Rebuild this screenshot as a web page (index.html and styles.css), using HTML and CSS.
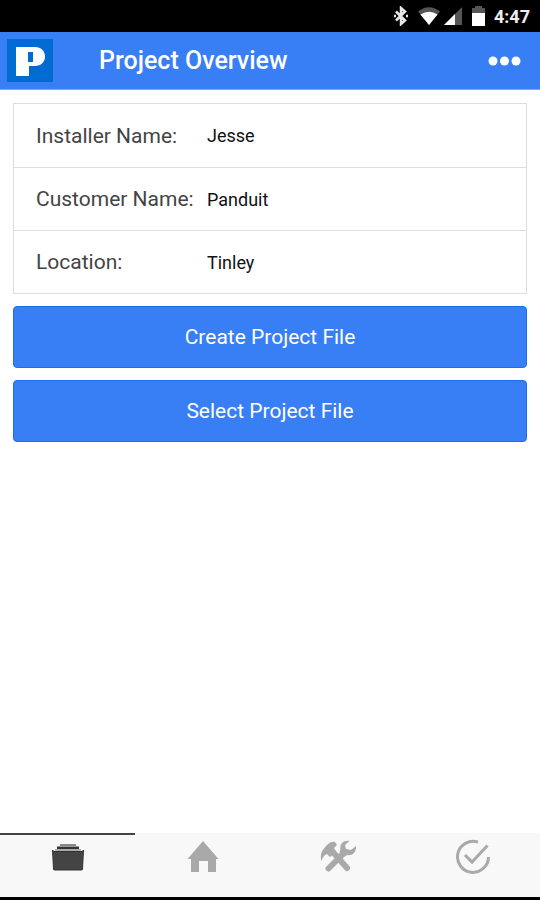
FILE: index.html
```html
<!DOCTYPE html>
<html lang="en">
<head>
<meta charset="utf-8">
<meta name="viewport" content="width=device-width, initial-scale=1">
<title>Project Overview</title>
<link rel="stylesheet" href="styles.css">
</head>
<body>
<div class="status">
  <svg width="14" height="20" viewBox="0 0 14 20" fill="none" stroke="#e8e8e8" stroke-width="2.500" aria-hidden="true"><path d="M2 5.500l9 9L7 18V2l4 3.500-9 9"/><path d="M0 10h2M12 10h2"/></svg>
  <svg class="wifi" width="22" height="18" viewBox="0 0 22 18" aria-hidden="true"><path fill="#555" d="M0 4.500Q11-4 22 4.500L11 18z"/><path fill="#fff" d="M2.500 7.500Q11 2 19.500 7.500L11 18z"/></svg>
  <svg class="signal" width="20" height="18" viewBox="0 0 20 18" aria-hidden="true"><path fill="#555" d="M19 0v18H1z"/><path fill="#fff" d="M12 7v11H1z"/></svg>
  <svg class="battery" width="13" height="20" viewBox="0 0 13 20" aria-hidden="true"><path fill="#555" d="M0 2h3V0h7v2h3v6H0z"/><path fill="#fff" d="M0 7h13v13H0z"/></svg>
  <span class="clock">4:47</span>
</div>
<header class="bar">
  <svg class="logo" width="46" height="43" viewBox="0 0 46 43" role="img" aria-label="Panduit"><path fill="#006bd2" d="M0 0h46v43H0z"/><path fill="#fff" fill-rule="evenodd" d="M9 8h19c6 0 10 4 10 9.500S34 27 28 27h-6v10H9zM21 13v10h5V13z"/></svg>
  <h1 class="title">Project Overview</h1>
  <button class="more" type="button" aria-label="More options"><svg width="34" height="10" viewBox="0 0 34 10" fill="#fff"><circle cx="5" cy="5" r="4.500"/><circle cx="16.500" cy="5" r="4.500"/><circle cx="28" cy="5" r="4.500"/></svg></button>
</header>
<main class="content">
  <form class="form">
    <div class="list">
      <div class="row"><label for="installer">Installer Name:</label><input id="installer" type="text" value="Jesse"></div>
      <div class="row"><label for="customer">Customer Name:</label><input id="customer" type="text" value="Panduit"></div>
      <div class="row"><label for="location">Location:</label><input id="location" type="text" value="Tinley"></div>
    </div>
    <button class="action" type="button">Create Project File</button>
    <button class="action" type="button">Select Project File</button>
  </form>
</main>
<nav class="tabs">
  <a class="tab active" href="#project" aria-label="Project"><svg width="36" height="36" viewBox="0 0 36 36"><path fill="#888" d="M10 5h16v2H10z"/><path fill="#333" d="M7 7.500h22v2.500H7z"/><path fill="#aaa" d="M5 10h26v2H5z"/><path fill="#444" stroke="#333" stroke-width="1" d="M2.500 11L4 12.500h28l1.500-1.500L32.500 30q0 1-1 1h-27q-1 0-1-1z"/></svg></a>
  <a class="tab" href="#home" aria-label="Home"><svg width="36" height="36" viewBox="0 0 36 36"><path fill="#a9a9a9" d="M18 2l15.500 18H31V33h-8V22h-9v11H6V20H2.500z"/></svg></a>
  <a class="tab" href="#tools" aria-label="Tools"><svg width="36" height="36" viewBox="0 0 36 36"><path fill="none" stroke="#a9a9a9" stroke-width="6" stroke-linecap="round" d="M12 12l15 17M8.500 29.500L25 13"/><path fill="#a9a9a9" d="M1.500 22C-.5 16 2 11 6 7c3-4 7-5 9-4l2 3-3 3 2 4-6 5-3-3c-3 1-4 3-5.500 7z"/><path fill="#a9a9a9" d="M29.500 2c-6-1-10 3-9 8l-1 4 4 4 4-2c5 1 9-3 8.500-9l-5 4-5-1-1-4z"/></svg></a>
  <a class="tab" href="#complete" aria-label="Complete"><svg width="36" height="36" viewBox="0 0 36 36" fill="none" stroke="#a9a9a9" stroke-width="3"><path d="M23 3.200A15.500 15.500 0 1 0 33.500 18"/><path d="M10 16l7 7L32.500 6.500"/></svg></a>
</nav>
</body>
</html>
```
FILE: styles.css
```css
* { box-sizing: border-box; }

body {
  margin: 0;
  min-height: 100vh;
  display: flex;
  flex-direction: column;
  background: #fff;
  font-family: Roboto, sans-serif;
}

.status {
  height: 32px;
  padding-right: 10px;
  display: flex;
  align-items: center;
  justify-content: flex-end;
  background: #000;
  color: #eee;
}

.wifi { margin-left: 10px; }
.signal { margin-left: 3px; }
.battery { margin-left: 9px; }

.clock {
  margin-left: 9px;
  font-size: 18px;
  font-weight: 700;
}

.bar {
  height: 58px;
  padding: 0 18px 0 7px;
  display: flex;
  align-items: center;
  background: #387ef5;
  border-bottom: 1px solid #79a9f6;
  color: #fff;
}

.title {
  flex: 1;
  margin: 0 0 0 46px;
  font-size: 25px;
  font-weight: 500;
}

.more {
  display: flex;
  padding: 0;
  border: 0;
  background: none;
}

.content {
  flex: 1;
  padding: 13px;
}

.form {
  display: flex;
  flex-direction: column;
  gap: 12px;
}

.list { border: 1px solid #ddd; }

.row {
  height: 63px;
  padding-left: 22px;
  display: flex;
  align-items: center;
  color: #444;
  font-size: 21px;
}

.row + .row { border-top: 1px solid #ddd; }

.row label {
  width: 171px;
  flex: none;
}

.row input {
  flex: 1;
  min-width: 0;
  padding: 0;
  border: 0;
  background: none;
  color: #111;
  font: 18px Roboto, sans-serif;
}

.action {
  height: 62px;
  border: 1px solid #1a6cf0;
  border-radius: 4px;
  background: #387ef5;
  color: #fff;
  font: 21px Roboto, sans-serif;
}

.tabs {
  height: 67px;
  display: flex;
  background: #f8f8f8;
  border-bottom: 3px solid #000;
}

.tab {
  flex: 1;
  display: flex;
  justify-content: center;
  padding-top: 4px;
  border-top: 2px solid transparent;
}

.active { border-top-color: #444; }
```
